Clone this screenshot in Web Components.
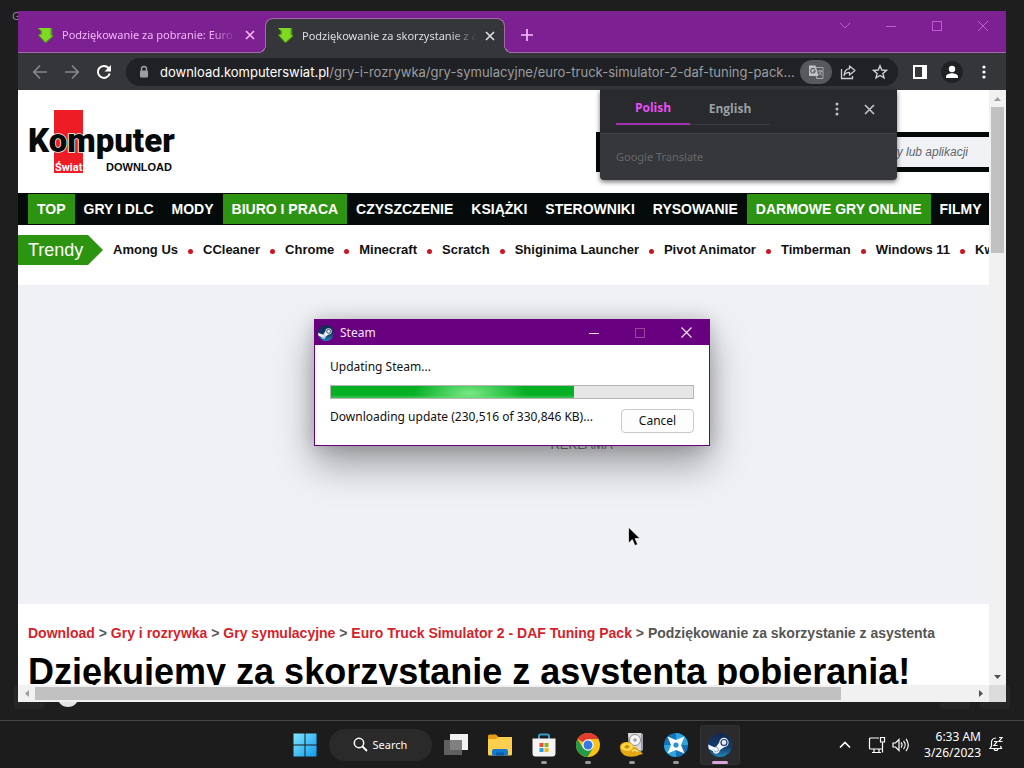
<!DOCTYPE html>
<html lang="pl">
<head>
<meta charset="utf-8">
<meta name="viewport" content="width=device-width, initial-scale=1">
<title>Desktop</title>
<style>
  html, body { margin: 0; height: 100%; }
  body { background: #1e1e1e; font-family: "Noto Sans", "Open Sans", sans-serif; overflow: hidden; }
</style>
</head>
<body>
<desk-top>
  <browser-window>
    <browser-tab slot="tabs">Podziękowanie za pobranie: Euro Truck</browser-tab>
    <browser-tab slot="tabs" active>Podziękowanie za skorzystanie z asystenta</browser-tab>
    <site-page></site-page>
    <translate-bubble slot="bubble"></translate-bubble>
  </browser-window>
  <steam-dialog></steam-dialog>
  <mouse-pointer></mouse-pointer>
  <task-bar slot="bar"></task-bar>
</desk-top>

<script>
const reset = `
  :host, *, *::before, *::after { box-sizing: border-box; }
  button, input { font: inherit; color: inherit; border: 0; margin: 0; padding: 0; background: none; }
  button { display: grid; place-items: center; }
  a { color: inherit; text-decoration: none; }
  svg { display: block; }
`;

function define(name, html) {
  const template = document.createElement('template');
  template.innerHTML = html.replace('<style>', '<style>' + reset);
  customElements.define(name, class extends HTMLElement {
    constructor() {
      super();
      this.attachShadow({ mode: 'open' }).append(template.content.cloneNode(true));
    }
  });
}

/* ---------- desktop ---------- */
define('desk-top', `
<style>
  :host { display: grid; grid-template-rows: 1fr auto; height: 100vh; background: #1e1e1e; }
  .area { position: relative; overflow: hidden; }
  .g { position: absolute; left: 12px; top: 8px; font-size: 11px; line-height: 15px; color: #8c8c8c; }
  .tile { position: absolute; bottom: 11px; width: 30px; height: 24px; border-radius: 3px; background: #262626; }
  .ball { position: absolute; left: 57px; bottom: 13px; width: 22px; height: 22px; border-radius: 50%; background: #e4e4e4; }
</style>
<div class="area">
  <span class="g">G</span>
  <i class="tile" style="left:14px"></i><i class="ball"></i>
  <i class="tile" style="right:54px"></i><i class="tile" style="right:14px"></i>
  <slot></slot>
</div>
<slot name="bar"></slot>`);

define('mouse-pointer', `
<style>:host { position: absolute; left: 627px; top: 526px; }</style>
<svg width="13" height="21" viewBox="0 0 13 21"><path d="M1.5 1.2v16l3.8-3.6 2.6 6 2.800-1.200-2.600-5.800h5z" fill="#000" stroke="#fff" stroke-width=".7"/></svg>`);

/* ---------- browser ---------- */
define('browser-tab', `
<style>
  :host { position: relative; display: flex; align-items: center; width: 240px; height: 34px; padding: 0 8px 0 12px; color: #f3b6f8; font-size: 11px; line-height: 16px; }
  :host([active]) { background: #35363a; color: #dcdde0; border: solid #a06ca8; border-width: 1px 1px 0; border-radius: 8px 8px 0 0; margin-bottom: -1px; height: 35px; padding: 0 7px 1px 11px; }
  :host([active])::before, :host([active])::after { content: ""; position: absolute; bottom: 0; width: 8px; height: 8px; }
  :host([active])::before { left: -8px; background: radial-gradient(circle at 0 0, transparent 7px, #a06ca8 7px 8px, #35363a 8px); }
  :host([active])::after { right: -8px; background: radial-gradient(circle at 100% 0, transparent 7px, #a06ca8 7px 8px, #35363a 8px); }
  .fav { flex: none; width: 17px; margin-right: 8px; }
  .label { flex: 1; min-width: 0; overflow: hidden; white-space: nowrap; margin-right: 6px; -webkit-mask-image: linear-gradient(90deg, #000 85%, transparent); mask-image: linear-gradient(90deg, #000 85%, transparent); }
  button { width: 14px; height: 14px; }
</style>
<svg class="fav" height="17" viewBox="0 0 17 17"><path d="M1 1h14l.5 8h1L9 16l-2-1-6-7h2.500V4z" fill="#4a9a14"/><path d="M1 1h12.500v7.500H16L8.500 15 1.500 7.500H5V4z" fill="#7fd821"/></svg>
<span class="label"><slot></slot></span>
<button aria-label="Close tab"><svg width="10" height="10" viewBox="0 0 10 10"><path d="M1 1l8 8M9 1L1 9" stroke="currentColor" stroke-width="1.700"/></svg></button>`);

define('browser-window', `
<style>
  :host { position: absolute; top: 11px; right: 18px; bottom: 18px; left: 18px; display: flex; flex-direction: column; background: #35363a; }
  .strip { display: flex; align-items: flex-end; height: 42px; flex: none; padding-left: 7px; background: #7d2092; border-bottom: 1px solid #a06ca8; }
  .plus { width: 28px; height: 34px; margin-left: 8px; color: #f7bdfb; }
  .controls { display: flex; margin-left: auto; align-self: flex-start; color: #c557d6; }
  .controls button { width: 46px; height: 29px; }
  .tools { display: flex; align-items: center; height: 37px; flex: none; padding: 0 6px; color: #e8eaed; }
  .tools button { width: 32px; height: 28px; flex: none; }
  .dim { color: #85878a; }
  .box { flex: 1; min-width: 0; display: flex; align-items: center; height: 28px; margin: 0 6px; padding: 0 2px 0 12px; border-radius: 14px; background: #202124; color: #9b9da0; font: 13px/18px Inter, "Noto Sans", sans-serif; }
  .url { flex: 1; min-width: 0; margin-left: 10px; white-space: nowrap; overflow: hidden; }
  .url b { font-weight: 400; color: #fff; }
  .box .on { background: #57595d; border-radius: 12px; height: 24px; color: #b5b6b8; }
  .box button { color: #cfd1d4; }
  .view { flex: 1; min-height: 0; display: grid; grid-template: minmax(0, 1fr) 17px / minmax(0, 1fr) 17px; background: #dcdcdc; }
  .page { overflow: hidden; background: #fff; }
  .bar { display: flex; background: #f1f1f1; }
  .bar span { flex: none; width: 17px; height: 17px; display: grid; place-items: center; color: #505050; }
  .v { flex-direction: column; }
  .track { flex: 1; display: flex; }
  .v .track { flex-direction: column; padding: 0 2px; }
  .h .track { padding: 2px 0; }
  .track i { background: #c1c1c1; }
  .v i { height: 26%; }
  .h i { width: 86%; }
  .off { opacity: .5; }
</style>
<div class="strip">
  <slot name="tabs"></slot>
  <button class="plus" aria-label="New tab"><svg width="12" height="12" viewBox="0 0 12 12"><path d="M6 0v12M0 6h12" stroke="currentColor" stroke-width="1.700"/></svg></button>
  <div class="controls">
    <button aria-label="Search tabs"><svg width="12" height="12" viewBox="0 0 12 12"><path d="M1 3l5 5 5-5" fill="none" stroke="currentColor"/></svg></button>
    <button aria-label="Minimize"><svg width="12" height="12" viewBox="0 0 12 12"><path d="M1 6.500h10" stroke="currentColor"/></svg></button>
    <button aria-label="Maximize"><svg width="12" height="12" viewBox="0 0 12 12"><rect x="1.500" y="1.500" width="9" height="9" fill="none" stroke="currentColor"/></svg></button>
    <button aria-label="Close"><svg width="12" height="12" viewBox="0 0 12 12"><path d="M1 1l10 10M11 1L1 11" stroke="currentColor"/></svg></button>
  </div>
</div>
<div class="tools">
  <button class="dim" aria-label="Back"><svg width="16" height="16" viewBox="0 0 16 16"><path d="M15 8H2M8 1.500L1.800 8 8 14.500" fill="none" stroke="currentColor" stroke-width="1.700"/></svg></button>
  <button class="dim" aria-label="Forward"><svg width="16" height="16" viewBox="0 0 16 16"><path d="M1 8h13M8 1.500L14.200 8 8 14.500" fill="none" stroke="currentColor" stroke-width="1.700"/></svg></button>
  <button aria-label="Reload"><svg width="16" height="16" viewBox="0 0 16 16"><path d="M13.700 9.500A6 6 0 1 1 12.500 4" fill="none" stroke="#fff" stroke-width="2"/><path d="M15 1v6.500H8.500z" fill="#fff"/></svg></button>
  <div class="box">
    <svg width="12" height="14" viewBox="0 0 12 14"><path d="M3.500 6V4a2.500 2.500 0 0 1 5 0v2" fill="none" stroke="currentColor" stroke-width="1.500"/><rect x="2" y="5.500" width="8" height="7" rx="1" fill="currentColor"/></svg>
    <span class="url"><b>download.komputerswiat.pl</b>/gry-i-rozrywka/gry-symulacyjne/euro-truck-simulator-2-daf-tuning-pack...</span>
    <button class="on" aria-label="Translate this page"><svg width="16" height="16" viewBox="0 0 16 16"><path d="M7 3.500h8v11H8.500" fill="none" stroke="#a5a7aa"/><path d="M1 1.500h6.500l3 10.500H1z" fill="#c2c3c5"/><path d="M7 5.500A2.300 2.300 0 1 0 7.300 7H5" fill="none" stroke="#57595d" stroke-width="1.200"/><path d="M9.500 7h5M12 6v1M13.500 7c-.5 2-2 3.500-3 4M11 8.500l3 3M8 12l1 2.500" fill="none" stroke="#b5b6b8"/></svg></button>
    <button aria-label="Share"><svg width="16" height="16" viewBox="0 0 16 16"><path d="M1.500 5v9.500h11V12" fill="none" stroke="currentColor" stroke-width="1.300"/><path d="M9.500 2l5.500 4.500L9.500 11V8.300C7 8.300 5 9.300 4 11.500 4.200 8 6 5 9.500 4.600z" fill="none" stroke="currentColor" stroke-width="1.300" stroke-linejoin="round"/></svg></button>
    <button aria-label="Bookmark"><svg width="16" height="16" viewBox="0 0 16 16"><path d="M8 1.800l1.800 4.200 4.600.4-3.500 3 1.100 4.500L8 11.500l-4 2.400 1.100-4.500-3.500-3 4.600-.4z" fill="none" stroke="currentColor" stroke-width="1.400"/></svg></button>
  </div>
  <button aria-label="Side panel"><svg width="14" height="14" viewBox="0 0 14 14"><path d="M0 0h14v14H0zM2 2v10h7V2z" fill="#fff" fill-rule="evenodd"/></svg></button>
  <button aria-label="Profile"><svg width="22" height="22" viewBox="0 0 22 22"><circle cx="11" cy="11" r="11" fill="#202124"/><circle cx="11" cy="8" r="3.200" fill="#fff"/><path d="M5 17v-1.500C5 13 9 12.200 11 12.200s6 .8 6 3.300V17z" fill="#fff"/></svg></button>
  <button aria-label="Menu"><svg width="4" height="14" viewBox="0 0 4 14" fill="#fff"><circle cx="2" cy="2" r="1.600"/><circle cx="2" cy="7" r="1.600"/><circle cx="2" cy="12" r="1.600"/></svg></button>
</div>
<div class="view">
  <div class="page"><slot></slot></div>
  <div class="bar v">
    <span class="off"><svg width="7" height="4" viewBox="0 0 7 4"><path d="M0 4l3.500-4L7 4z" fill="currentColor"/></svg></span>
    <div class="track"><i></i></div>
    <span><svg width="7" height="4" viewBox="0 0 7 4"><path d="M0 0l3.500 4L7 0z" fill="currentColor"/></svg></span>
  </div>
  <div class="bar h">
    <span class="off"><svg width="4" height="7" viewBox="0 0 4 7"><path d="M4 0L0 3.500 4 7z" fill="currentColor"/></svg></span>
    <div class="track"><i></i></div>
    <span><svg width="4" height="7" viewBox="0 0 4 7"><path d="M0 0l4 3.500L0 7z" fill="currentColor"/></svg></span>
  </div>
</div>
<slot name="bubble"></slot>`);

define('translate-bubble', `
<style>
  :host { position: absolute; top: 79px; right: 109px; width: 297px; border-radius: 0 0 4px 4px; background: #36373a; box-shadow: 0 2px 5px rgba(0,0,0,.55); overflow: hidden; color: #bdc1c6; font: bold 12px/18px "Open Sans", sans-serif; }
  .top { display: flex; height: 43px; padding: 0 12px 8px 16px; background: #292a2d; }
  .top button { height: 35px; padding-top: 3px; }
  .top .lang { width: 80px; border-bottom: 1px solid #3e3f42; color: #9aa0a6; }
  .top .on { width: 74px; border-bottom: 2px solid #a532b3; color: #e84ff5; }
  .icon { width: 32px; }
  .push { margin-left: auto; }
  .brand { height: 47px; padding: 0 16px; display: flex; align-items: center; border-top: 1px solid #414245; color: #66686b; font: 11px/16px "Noto Sans", sans-serif; }
</style>
<div class="top">
  <button class="lang on">Polish</button><button class="lang">English</button>
  <button class="icon push" aria-label="Options"><svg width="4" height="14" viewBox="0 0 4 14" fill="currentColor"><circle cx="2" cy="2" r="1.500"/><circle cx="2" cy="7" r="1.500"/><circle cx="2" cy="12" r="1.500"/></svg></button>
  <button class="icon" aria-label="Close"><svg width="11" height="11" viewBox="0 0 11 11"><path d="M1 1l9 9M10 1l-9 9" stroke="currentColor" stroke-width="1.700"/></svg></button>
</div>
<div class="brand">Google Translate</div>`);

/* ---------- web page ---------- */
define('site-logo', `
<style>:host { display: block; }</style>
<a href="#" aria-label="Komputer Świat Download"><svg width="152" height="66" viewBox="0 0 152 66">
  <rect x="26" y="0" width="29" height="63" fill="#ee1c25"/>
  <text x="0" y="42" font-family="Roboto" font-weight="900" font-size="33" fill="#060a0a" stroke="#fff" stroke-width="1.500" paint-order="stroke">Komputer</text>
  <text x="27" y="61" font-family="Roboto" font-weight="700" font-size="11" fill="#fff">Świat</text>
  <text x="78" y="61" font-family="Liberation Sans" font-weight="700" font-size="11" fill="#060a0a">DOWNLOAD</text>
</svg></a>`);

define('site-nav', `
<style>
  :host { display: block; background: #040b0a; }
  nav { display: flex; padding: 1px 0 1px 10px; }
  a { padding: 0 9px; color: #fff; font: bold 14px/30px "Liberation Sans", Arial, sans-serif; white-space: nowrap; }
  .on { background: #2d9412; }
</style>
<nav>
  <a class="on" href="#">TOP</a><a href="#">GRY I DLC</a><a href="#">MODY</a><a class="on" href="#">BIURO I PRACA</a><a href="#">CZYSZCZENIE</a><a href="#">KSIĄŻKI</a><a href="#">STEROWNIKI</a><a href="#">RYSOWANIE</a><a class="on" href="#">DARMOWE GRY ONLINE</a><a href="#">FILMY</a>
</nav>`);

define('trend-bar', `
<style>
  :host { display: flex; align-items: center; height: 30px; font-family: "Liberation Sans", Arial, sans-serif; }
  .tag { width: 85px; height: 30px; padding-left: 10px; background: #2d9412; color: #fff; font-size: 18px; line-height: 30px; clip-path: polygon(0 0, 70px 0, 100% 50%, 70px 100%, 0 100%); }
  ul { display: flex; margin: 0; padding: 0 0 0 10px; list-style: none; }
  li { display: flex; align-items: center; font: bold 13px/18px "Liberation Sans", Arial, sans-serif; color: #111; white-space: nowrap; }
  li + li::before { content: ""; width: 5px; height: 5px; border-radius: 50%; background: #cc1522; margin: 2px 10px 0; }
</style>
<span class="tag">Trendy</span>
<ul><li><a href="#">Among Us</a></li><li><a href="#">CCleaner</a></li><li><a href="#">Chrome</a></li><li><a href="#">Minecraft</a></li><li><a href="#">Scratch</a></li><li><a href="#">Shiginima Launcher</a></li><li><a href="#">Pivot Animator</a></li><li><a href="#">Timberman</a></li><li><a href="#">Windows 11</a></li><li><a href="#">Kw</a></li></ul>`);

define('site-page', `
<style>
  :host { display: block; min-width: 1127px; background: #fff; font-family: "Liberation Sans", Arial, sans-serif; }
  header { display: flex; justify-content: space-between; height: 103px; padding: 20px 28px 0 10px; }
  .find { width: 521px; height: 40px; margin-top: 22px; border: 5px solid #050808; background: #f0f2f5; }
  .find input { display: block; width: 100%; height: 30px; padding-right: 144px; text-align: right; font: italic 12px/18px "Liberation Sans", Arial, sans-serif; outline: 0; }
  .find input::placeholder { color: #63666a; opacity: 1; }
  trend-bar { margin: 10px 0 20px; }
  .ad { display: grid; place-items: center; height: 319px; background: #f0f1f5; color: #77797d; font-size: 13px; }
  .crumbs { padding: 20px 10px 0; font: bold 14px/18px "Liberation Sans", Arial, sans-serif; color: #555; white-space: nowrap; }
  .crumbs a { color: #d51f2c; }
  h1 { margin: 9px 10px 0; font: bold 36px/42px "Liberation Sans", Arial, sans-serif; color: #000; white-space: nowrap; }
</style>
<header>
  <site-logo></site-logo>
  <div class="find"><input type="text" aria-label="Szukaj" placeholder="Wpisz nazwę gry lub aplikacji"></div>
</header>
<site-nav></site-nav>
<trend-bar></trend-bar>
<div class="ad">REKLAMA</div>
<div class="crumbs"><a href="#">Download</a> &gt; <a href="#">Gry i rozrywka</a> &gt; <a href="#">Gry symulacyjne</a> &gt; <a href="#">Euro Truck Simulator 2 - DAF Tuning Pack</a> &gt; Podziękowanie za skorzystanie z asystenta</div>
<h1>Dziękujemy za skorzystanie z asystenta pobierania!</h1>`);

/* ---------- Steam updater ---------- */
define('steam-logo', `
<style>:host { display: block; width: 16px; } svg { width: 100%; height: auto; }</style>
<svg viewBox="0 0 24 24"><defs><linearGradient id="s" x2="0" y2="1"><stop stop-color="#14264f"/><stop offset=".6" stop-color="#123f6d"/><stop offset="1" stop-color="#1f86b8"/></linearGradient></defs>
<circle cx="12" cy="12" r="12" fill="url(#s)"/><path d="M0 11.500l6.500 2.700 1.700-.5 3-4.300a4.700 4.700 0 1 1 4.800 4.800l-4.300 3.100A3.500 3.500 0 0 1 4.800 18L.8 16z" fill="#f1f4f8"/><circle cx="16" cy="9.500" r="3" fill="#e6ebf2" stroke="#1a3260" stroke-width="1.200"/><path d="M6 17.300a2.300 2.300 0 1 0 1.800-3" fill="none" stroke="#7f93b0" stroke-width=".8"/></svg>`);

define('steam-dialog', `
<style>
  :host { position: absolute; left: 314px; top: 319px; width: 396px; border: 1px solid #690080; background: #fff; box-shadow: 0 18px 36px rgba(0,0,0,.36), 0 0 16px rgba(0,0,0,.16); color: #111; font: 12px/16px "Noto Sans", sans-serif; }
  .title { display: flex; align-items: center; height: 25px; padding-left: 3px; background: #690080; color: #f4e4f7; }
  .title span { margin-left: 6px; margin-right: auto; }
  .title button { width: 46px; height: 25px; }
  .title .off { color: #96489f; }
  .body { display: grid; gap: 10px; padding: 14px 15px 12px; }
  progress { -webkit-appearance: none; appearance: none; display: block; width: 100%; height: 14px; border: 1px solid #b5b5b5; background: #e6e6e6; }
  progress::-webkit-progress-bar { background: #e6e6e6; }
  progress::-webkit-progress-value { background: radial-gradient(ellipse 56px 20px at 57% 60%, #7ae886, rgba(122,232,134,0)), linear-gradient(#06b025 75%, #43c457); }
  .foot { display: flex; justify-content: space-between; align-items: flex-start; }
  .cancel { width: 73px; height: 24px; border: 1px solid #c9c9c9; border-radius: 4px; background: #fdfdfd; }
</style>
<div class="title"><steam-logo></steam-logo><span>Steam</span>
  <button aria-label="Minimize"><svg width="10" height="10" viewBox="0 0 10 10"><path d="M0 5.500h10" stroke="currentColor"/></svg></button>
  <button class="off" disabled aria-label="Maximize"><svg width="10" height="10" viewBox="0 0 10 10"><rect x=".5" y=".5" width="9" height="9" fill="none" stroke="currentColor"/></svg></button>
  <button aria-label="Close"><svg width="11" height="11" viewBox="0 0 11 11"><path d="M.5.5l10 10M10.500.5l-10 10" stroke="currentColor" stroke-width="1.200"/></svg></button>
</div>
<div class="body">
  <label for="p">Updating Steam...</label>
  <progress id="p" value="67" max="100"></progress>
  <div class="foot"><span>Downloading update (230,516 of 330,846 KB)...</span><button class="cancel">Cancel</button></div>
</div>`);

/* ---------- taskbar ---------- */
define('task-item', `
<style>
  :host { position: relative; display: block; }
  button { width: 40px; height: 40px; border-radius: 4px; }
  :host([run])::after { content: ""; position: absolute; left: 17px; bottom: 1px; width: 6px; height: 3px; border-radius: 2px; background: #9a9a9a; }
  :host([active]) button { background: #2b2b2d; box-shadow: inset 0 0 0 1px #323234; }
  :host([active])::after { left: 12px; width: 16px; background: #d9a3dc; }
</style>
<button><slot></slot></button>`);

define('task-bar', `
<style>
  :host { display: grid; grid-template-columns: 1fr auto 1fr; align-items: center; height: 48px; border-top: 1px solid #454545; background: #1c1c1c; color: #fff; font-size: 11px; }
  .apps { display: flex; gap: 4px; align-items: center; grid-column: 2; }
  .search { display: flex; align-items: center; justify-content: center; gap: 5px; width: 103px; height: 32px; border-radius: 16px; background: #2a2a2a; }
  .tray { display: flex; align-items: center; justify-content: flex-end; padding-right: 20px; }
  .tray button { width: 24px; height: 32px; }
  .tray .up { width: 32px; margin-right: 4px; }
  .clock { text-align: right; line-height: 16px; font-size: 12px; margin: 0 7px 0 11px; }
  .tray .bell { width: 16px; }
  steam-logo { width: 24px; }
</style>
<div class="apps">
  <task-item><svg width="24" height="24" viewBox="0 0 24 24"><defs><linearGradient id="w" x2="1" y2="1"><stop stop-color="#7fe6fd"/><stop offset="1" stop-color="#129aef"/></linearGradient></defs><path d="M.5.500h11v11h-11zM12.500.500h11v11h-11zM.5 12.500h11v11h-11zM12.500 12.500h11v11h-11z" fill="url(#w)"/></svg></task-item>
  <button class="search"><svg width="15" height="15" viewBox="0 0 15 15"><circle cx="6" cy="6" r="4.700" fill="none" stroke="#fff" stroke-width="1.500"/><path d="M9.500 9.500l4.500 4.500" stroke="#fff" stroke-width="1.800"/></svg><span>Search</span></button>
  <task-item><svg width="24" height="24" viewBox="0 0 24 24"><rect x="6" y="1" width="18" height="16" fill="#f1f1f1"/><rect x="0" y="7" width="18" height="15" fill="#6c6c6c" fill-opacity=".85"/></svg></task-item>
  <task-item><svg width="24" height="24" viewBox="0 0 24 24"><path d="M0 3a1.500 1.500 0 0 1 1.500-1.500H8L10.500 4H24v6H0z" fill="#e39d16"/><path d="M0 6h8l2.500-2H23a1 1 0 0 1 1 1v16a1.500 1.500 0 0 1-1.500 1.500h-21A1.500 1.500 0 0 1 0 21z" fill="#fdcf4f"/><path d="M4 22.500V18a2 2 0 0 1 2-2h12a2 2 0 0 1 2 2v4.500z" fill="#1379d1"/><path d="M8 19.500h8v3H8z" fill="#0d5aa5"/></svg></task-item>
  <task-item run><svg width="24" height="26" viewBox="0 0 24 26"><path d="M7 7V4a1.500 1.500 0 0 1 1.500-1.500h7A1.500 1.500 0 0 1 17 4v3" fill="none" stroke="#3a9bc9" stroke-width="2"/><path d="M.5 6.500h23v15a3 3 0 0 1-3 3h-17a3 3 0 0 1-3-3z" fill="#f5f4f3"/><path d="M7.500 11h4v4h-4z" fill="#e5532d"/><path d="M12.500 11h4v4h-4z" fill="#80b927"/><path d="M7.500 16h4v4h-4z" fill="#1fa3e6"/><path d="M12.500 16h4v4h-4z" fill="#f8b51b"/></svg></task-item>
  <task-item run><svg width="24" height="24" viewBox="0 0 24 24"><circle cx="12" cy="12" r="12" fill="#fbc116"/><path d="M12 12L1.600 6A12 12 0 0 1 22.400 6H12z" fill="#e33b2e"/><path d="M1.600 6A12 12 0 0 0 11.500 24L17 15l-10 0z" fill="#229a47"/><circle cx="12" cy="12" r="5.700" fill="#fff"/><circle cx="12" cy="12" r="4.500" fill="#3478e8"/></svg></task-item>
  <task-item run><svg width="24" height="26" viewBox="0 0 24 26"><path d="M8 1h13l2 1v16l-5 4-8-3z" fill="#9d9fa3"/><path d="M8 1h13v17H9z" fill="#d7d9dc"/><circle cx="15" cy="8" r="5.500" fill="#f5f5f5" stroke="#8d9094"/><circle cx="15" cy="8" r="1.800" fill="#9b9da0"/><path d="M0 15c0-4 4-5.500 8-5 4 .5 5 3 5 5 2 0 4 0 5 2 0 2 3 2 5 5l-4 1-2 1c-5 1-10 1-13-1-3-2-4-5-4-8z" fill="#e2a713"/><ellipse cx="7" cy="15" rx="6" ry="4" fill="#ffd84a"/><path d="M4 15l3-2.500 3 2-3 2.500z" fill="#c78a08"/><path d="M12 19c2-1 4-1 6 1" fill="none" stroke="#ffe27a" stroke-width="1.500"/></svg></task-item>
  <task-item run><svg width="24" height="24" viewBox="0 0 24 24"><circle cx="12" cy="12" r="12" fill="#1473b9"/><path d="M12 12V0a12 12 0 0 1 12 12zM12 12v12A12 12 0 0 1 0 12z" fill="#2ba4df"/><path d="M3.500 3.500L12 7l8.500-3.500L17 12l3.500 8.500L12 17l-8.500 3.500L7 12z" fill="#fff"/><circle cx="12" cy="12" r="2.600" fill="#2b8fd0"/></svg></task-item>
  <task-item run active><steam-logo></steam-logo></task-item>
</div>
<div class="tray">
  <button class="up" aria-label="Hidden icons"><svg width="12" height="8" viewBox="0 0 12 8"><path d="M1 6.500l5-5 5 5" fill="none" stroke="#fff" stroke-width="1.600"/></svg></button>
  <button aria-label="Network"><svg width="18" height="18" viewBox="0 0 18 18" fill="none" stroke="#fff" stroke-width="1.200"><path d="M11 2H2.500a1 1 0 0 0-1 1v9a1 1 0 0 0 1 1H14M6 13v3.500M11 13v3.500M4 16.500h9"/><path d="M12.500 1.500h4v4.500h-4zM14.500 6v10.500"/></svg></button>
  <button aria-label="Volume"><svg width="18" height="16" viewBox="0 0 18 16" fill="none" stroke="#fff" stroke-width="1.200"><path d="M1 6h2.500L7 2.500v11L3.500 10H1zM9 5.500a3.500 3.500 0 0 1 0 5M11.500 4a6 6 0 0 1 0 8M14 2a9 9 0 0 1 0 12"/></svg></button>
  <div class="clock"><div>6:33 AM</div><div>3/26/2023</div></div>
  <button class="bell" aria-label="Notifications"><svg width="16" height="17" viewBox="0 0 16 17" fill="none" stroke="#fff" stroke-width="1.200"><path d="M8 2C5 2 3.500 4 3.500 6.500V10L2 12.500h11.500L12.500 10M6 13c.5 2 3.500 2 4 0M6 5.500h3L6 9.500h3.500M11 1.500h3l-3 4h3.500"/></svg></button>
</div>`);
</script>
</body>
</html>
